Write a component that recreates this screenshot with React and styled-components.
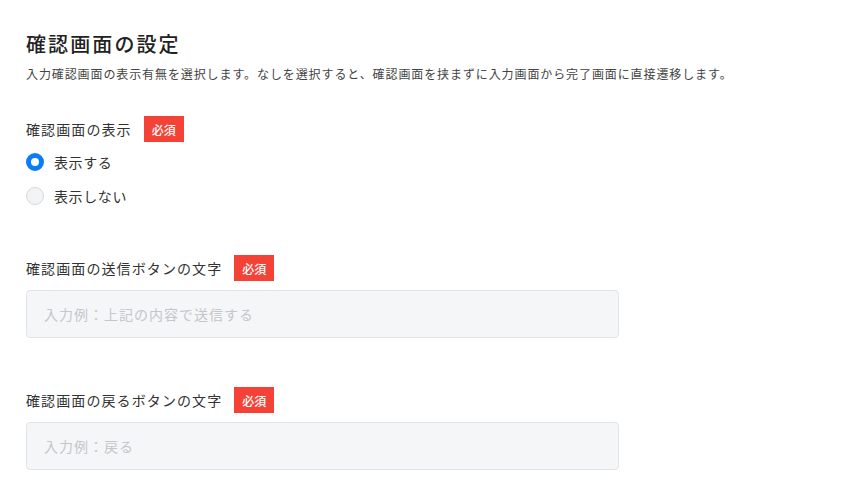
import React from 'react';
import styled, { createGlobalStyle } from 'styled-components';

const colors = {
  text: '#333333',
  sub: '#444444',
  red: '#f44336',
  blue: '#0a7cf8',
  inputBg: '#f5f6f8',
  inputBorder: '#e2e4e8',
  placeholder: '#c4c6ca'
};

const GlobalStyle = createGlobalStyle`
  body {
    margin: 0;
    background: #ffffff;
    font-family: "Noto Sans CJK JP", "Noto Sans", sans-serif;
    color: ${colors.text};
  }
`;

const Page = styled.div`
  padding: 29px 26px 0 26px;
  width: 593px;
`;

const Title = styled.h1`
  margin: 0;
  font-size: 20px;
  font-weight: 500;
  line-height: 30px;
  letter-spacing: 2.1px;
  color: #222222;
`;

const Description = styled.p`
  margin: 6px 0 0 0;
  font-size: 12px;
  line-height: 18px;
  white-space: nowrap;
  color: ${colors.sub};
  letter-spacing: 0.9px;
`;

const Field = styled.div`
  margin-top: ${(props) => props.top}px;
  display: flex;
  flex-direction: column;
`;

const LabelRow = styled.div`
  display: flex;
  align-items: center;
  gap: 12px;
  height: 26px;
`;

const Label = styled.span`
  font-size: 14px;
  letter-spacing: 1.1px;
  line-height: 20px;
`;

const Badge = styled.span`
  display: inline-flex;
  align-items: center;
  justify-content: center;
  width: 40px;
  height: 26px;
  background: ${colors.red};
  color: #ffffff;
  font-size: 12px;
  font-weight: 500;
`;

const RadioList = styled.div`
  display: flex;
  flex-direction: column;
  gap: 10px;
  margin-top: 8px;
`;

const RadioRow = styled.label`
  display: flex;
  align-items: center;
  gap: 10px;
  height: 24px;
  font-size: 14px;
  letter-spacing: 0.6px;
`;

const Circle = styled.span`
  box-sizing: border-box;
  width: 18px;
  height: 18px;
  border-radius: 50%;
  background: ${(props) => props.checked ? '#ffffff' : '#f3f4f6'};
  border: ${(props) => props.checked ? `5px solid ${colors.blue}` : '1px solid #d6d8dc'};
`;

const Input = styled.div`
  box-sizing: border-box;
  margin-top: 9px;
  height: 48px;
  display: flex;
  align-items: center;
  padding: 0 17px;
  background: ${colors.inputBg};
  border: 1px solid ${colors.inputBorder};
  border-radius: 4px;
  font-size: 14px;
  letter-spacing: 1px;
  color: ${colors.placeholder};
`;

function Radio({ label, checked }) {
  return (
    <RadioRow>
      <Circle checked={ checked } />
      <span>{label}</span>
    </RadioRow>
  );
}

function TextField({ label, placeholder, top }) {
  return (
    <Field top={ top }>
      <LabelRow>
        <Label>{label}</Label>
        <Badge>必須</Badge>
      </LabelRow>
      <Input>{placeholder}</Input>
    </Field>
  );
}

export default function App() {
  return (
    <>
      <GlobalStyle />
      <Page>
        <Title>確認画面の設定</Title>
        <Description>
          入力確認画面の表示有無を選択します。なしを選択すると、確認画面を挟まずに入力画面から完了画面に直接遷移します。
        </Description>
        <Field top={ 33 }>
          <LabelRow>
            <Label>確認画面の表示</Label>
            <Badge>必須</Badge>
          </LabelRow>
          <RadioList>
            <Radio label="表示する" checked={ true } />
            <Radio label="表示しない" checked={ false } />
          </RadioList>
        </Field>
        <TextField top={ 47 } label="確認画面の送信ボタンの文字" placeholder="入力例：上記の内容で送信する" />
        <TextField top={ 49 } label="確認画面の戻るボタンの文字" placeholder="入力例：戻る" />
      </Page>
    </>
  );
}
